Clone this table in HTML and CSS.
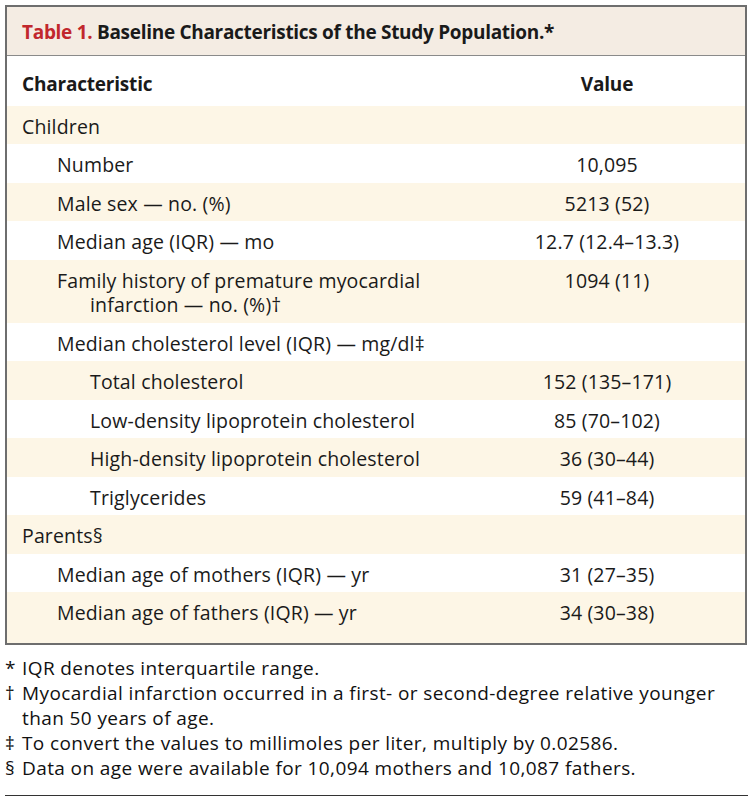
FILE: index.html
```html
<!DOCTYPE html>
<html lang="en">
<head>
<meta charset="utf-8">
<title>Table 1</title>
<link rel="stylesheet" href="styles.css">
</head>
<body>
<div class="page">
  <div class="box">
    <div class="caption"><span class="tnum">Table 1.</span> Baseline Characteristics of the Study Population.*</div>
    <table class="tbl">
      <thead>
        <tr class="head"><th class="c1">Characteristic</th><th class="c2">Value</th></tr>
      </thead>
      <tbody>
        <tr class="alt"><td class="c1 l0">Children</td><td class="c2"></td></tr>
        <tr><td class="c1 l1">Number</td><td class="c2">10,095</td></tr>
        <tr class="alt"><td class="c1 l1">Male sex — no. (%)</td><td class="c2">5213 (52)</td></tr>
        <tr><td class="c1 l1">Median age (IQR) — mo</td><td class="c2">12.7 (12.4–13.3)</td></tr>
        <tr class="alt"><td class="c1 l1 hang">Family history of premature myocardial infarction — no. (%)†</td><td class="c2">1094 (11)</td></tr>
        <tr><td class="c1 l1">Median cholesterol level (IQR) — mg/dl‡</td><td class="c2"></td></tr>
        <tr class="alt"><td class="c1 l2">Total cholesterol</td><td class="c2">152 (135–171)</td></tr>
        <tr><td class="c1 l2">Low-density lipoprotein cholesterol</td><td class="c2">85 (70–102)</td></tr>
        <tr class="alt"><td class="c1 l2">High-density lipoprotein cholesterol</td><td class="c2">36 (30–44)</td></tr>
        <tr><td class="c1 l2">Triglycerides</td><td class="c2">59 (41–84)</td></tr>
        <tr class="alt"><td class="c1 l0">Parents§</td><td class="c2"></td></tr>
        <tr><td class="c1 l1">Median age of mothers (IQR) — yr</td><td class="c2">31 (27–35)</td></tr>
        <tr class="alt last"><td class="c1 l1">Median age of fathers (IQR) — yr</td><td class="c2">34 (30–38)</td></tr>
      </tbody>
    </table>
  </div>
  <div class="notes">
    <div class="note"><span class="sym">*</span><span>IQR denotes interquartile range.</span></div>
    <div class="note"><span class="sym">†</span><span>Myocardial infarction occurred in a first- or second-degree relative younger than 50 years of age.</span></div>
    <div class="note"><span class="sym">‡</span><span>To convert the values to millimoles per liter, multiply by 0.02586.</span></div>
    <div class="note"><span class="sym">§</span><span>Data on age were available for 10,094 mothers and 10,087 fathers.</span></div>
  </div>
  <div class="rule"></div>
</div>
</body>
</html>
```
FILE: styles.css
```css
html, body {
  margin: 0;
  padding: 0;
  background: #ffffff;
}
.page {
  padding: 5px 9px 0 5px;
  font-family: "Open Sans", Lato, sans-serif;
  color: #1a1a1a;
}
.box {
  border: 2px solid #6e6e6e;
  background: #ffffff;
}
.caption {
  background: #f4ece3;
  border-bottom: 1px solid #8a8a8a;
  height: 49px;
  box-sizing: border-box;
  padding: 13px 0 0 15px;
  font-size: 19px;
  font-weight: 700;
  line-height: 24px;
  letter-spacing: -0.3px;
}
.tnum {
  color: #c1272d;
}
.tbl {
  width: 100%;
  border-collapse: collapse;
  font-size: 19.5px;
  letter-spacing: 0.15px;
  line-height: 24.5px;
}
.tbl th, .tbl td {
  padding: 9px 0 5px;
  vertical-align: top;
  font-weight: 400;
}
.tbl .head th {
  font-weight: 700;
  font-size: 19px;
  letter-spacing: -0.2px;
  padding: 16px 0 9px;
}
.c1 {
  text-align: left;
}
.c2 {
  width: 276px;
  text-align: center;
}
.tbl th.c1 { padding-left: 15px; }
.tbl .l0 { padding-left: 15px; }
.tbl .l1 { padding-left: 50px; }
.tbl .l2 { padding-left: 83px; }
.tbl .hang {
  padding-left: 83px;
  text-indent: -33px;
  padding-right: 20px;
}
.alt td {
  background: #fdf6e6;
}
.tbl .last td {
  padding-bottom: 17px;
}
.notes {
  margin-top: 11px;
  font-family: "Open Sans", sans-serif;
  font-size: 19px;
  letter-spacing: 0.4px;
  line-height: 25px;
  color: #111111;
}
.note {
  display: grid;
  grid-template-columns: 17px 1fr;
  padding-right: 12px;
}
.rule {
  margin-top: 14px;
  border-top: 1px solid #333;
  margin-right: -1px;
}
```
